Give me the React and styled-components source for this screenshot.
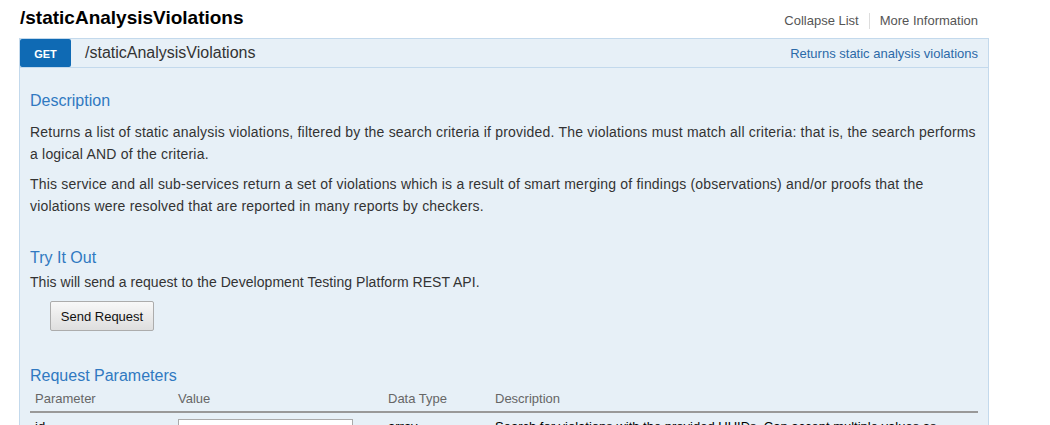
import React from "react";
import styled, { createGlobalStyle } from "styled-components";

const Global = createGlobalStyle`
  html, body { margin: 0; padding: 0; background: #fff; }
  body { font-family: "Liberation Sans", Arial, sans-serif; color: #333; }
  * { box-sizing: border-box; }
`;

const Page = styled.div`
  width: 970px;
  margin-left: 19px;
`;

const TitleRow = styled.div`
  height: 38px;
  display: flex;
  align-items: center;
  justify-content: space-between;
  padding-left: 1px;
  padding-right: 11px;
`;

const Title = styled.h2`
  margin: 0;
  margin-top: -3px;
  font-size: 19px;
  font-weight: bold;
  color: #000;
`;

const Links = styled.div`
  display: flex;
  align-items: center;
  font-size: 13px;
  color: #555;
  padding-top: 3px;
`;

const LinkItem = styled.span`
  padding: 0 10px;
  line-height: 16px;
  border-left: ${(p) => (p.$sep ? "1px solid #ddd" : "none")};
  &:last-child { padding-right: 0; }
`;

const Panel = styled.div`
  border: 1px solid #c3d9ec;
  background: #e7f0f7;
`;

const Header = styled.div`
  height: 29px;
  display: flex;
  align-items: center;
  border-bottom: 1px solid #c3d9ec;
  padding-right: 10px;
`;

const Method = styled.span`
  width: 51px;
  height: 28px;
  align-self: flex-start;
  background: #0f6ab4;
  color: #fff;
  font-size: 11px;
  font-weight: bold;
  display: flex;
  align-items: center;
  justify-content: center;
  border-radius: 2px;
  padding-top: 2px;
`;

const Path = styled.span`
  margin-left: 14px;
  font-size: 16px;
  color: #333;
  flex: 1;
`;

const Summary = styled.span`
  font-size: 13px;
  color: #2c6aa8;
`;

const Content = styled.div`
  padding: 23px 10px 0 10px;
`;

const Heading = styled.h4`
  margin: ${(p) => p.$mt || "0"} 0 0 0;
  font-size: 16px;
  font-weight: normal;
  line-height: 20px;
  color: #3079c1;
`;

const Para = styled.p`
  margin: ${(p) => p.$mt || "0"} 0 0 0;
  font-size: 14px;
  letter-spacing: ${(p) => p.$ls || "0.2px"};
  line-height: ${(p) => p.$lh || "22px"};
  color: #333;
`;

const Button = styled.button`
  margin: 9px 0 0 20px;
  width: 104px;
  height: 30px;
  font-family: "Liberation Sans", Arial, sans-serif;
  font-size: 13px;
  color: #111;
  background: linear-gradient(#f8f8f8, #dedede);
  border: 1px solid #acacac;
  border-radius: 2px;
  display: block;
`;

const Table = styled.table`
  width: 100%;
  margin-top: 3px;
  border-collapse: collapse;
  font-size: 13px;
`;

const Th = styled.th`
  text-align: left;
  font-weight: normal;
  color: #666;
  padding: 2px 5px 4px;
  line-height: 16px;
  border-bottom: 2px solid #999;
  width: ${(p) => p.$w};
`;

const Td = styled.td`
  vertical-align: top;
  padding: 6px 5px;
  color: #000;
  line-height: 16px;
`;

const Input = styled.input`
  width: 175px;
  height: 24px;
  border: 1px solid #aaa;
  background: #fff;
  margin: 0;
`;

export default function App() {
  return (
    <>
      <Global />
      <Page>
        <TitleRow>
          <Title>/staticAnalysisViolations</Title>
          <Links>
            <LinkItem>Collapse List</LinkItem>
            <LinkItem $sep>More Information</LinkItem>
          </Links>
        </TitleRow>
        <Panel>
          <Header>
            <Method>GET</Method>
            <Path>/staticAnalysisViolations</Path>
            <Summary>Returns static analysis violations</Summary>
          </Header>
          <Content>
            <Heading>Description</Heading>
            <Para $mt="10px">
              Returns a list of static analysis violations, filtered by the search criteria if provided. The violations must match all criteria: that is, the search performs a logical AND of the criteria.
            </Para>
            <Para $mt="8px">
              This service and all sub-services return a set of violations which is a result of smart merging of findings (observations) and/or proofs that the violations were resolved that are reported in many reports by checkers.
            </Para>
            <Heading $mt="31px">Try It Out</Heading>
            <Para $mt="4px" $lh="20px" $ls="0.05px">
              This will send a request to the Development Testing Platform REST API.
            </Para>
            <Button>Send Request</Button>
            <Heading $mt="35px">Request Parameters</Heading>
            <Table>
              <thead>
                <tr>
                  <Th $w="143px">Parameter</Th>
                  <Th $w="210px">Value</Th>
                  <Th $w="107px">Data Type</Th>
                  <Th>Description</Th>
                </tr>
              </thead>
              <tbody>
                <tr>
                  <Td>id</Td>
                  <Td><Input /></Td>
                  <Td>array</Td>
                  <Td>Search for violations with the provided UUIDs. Can accept multiple values as comma-separated list.</Td>
                </tr>
              </tbody>
            </Table>
          </Content>
        </Panel>
      </Page>
    </>
  );
}
